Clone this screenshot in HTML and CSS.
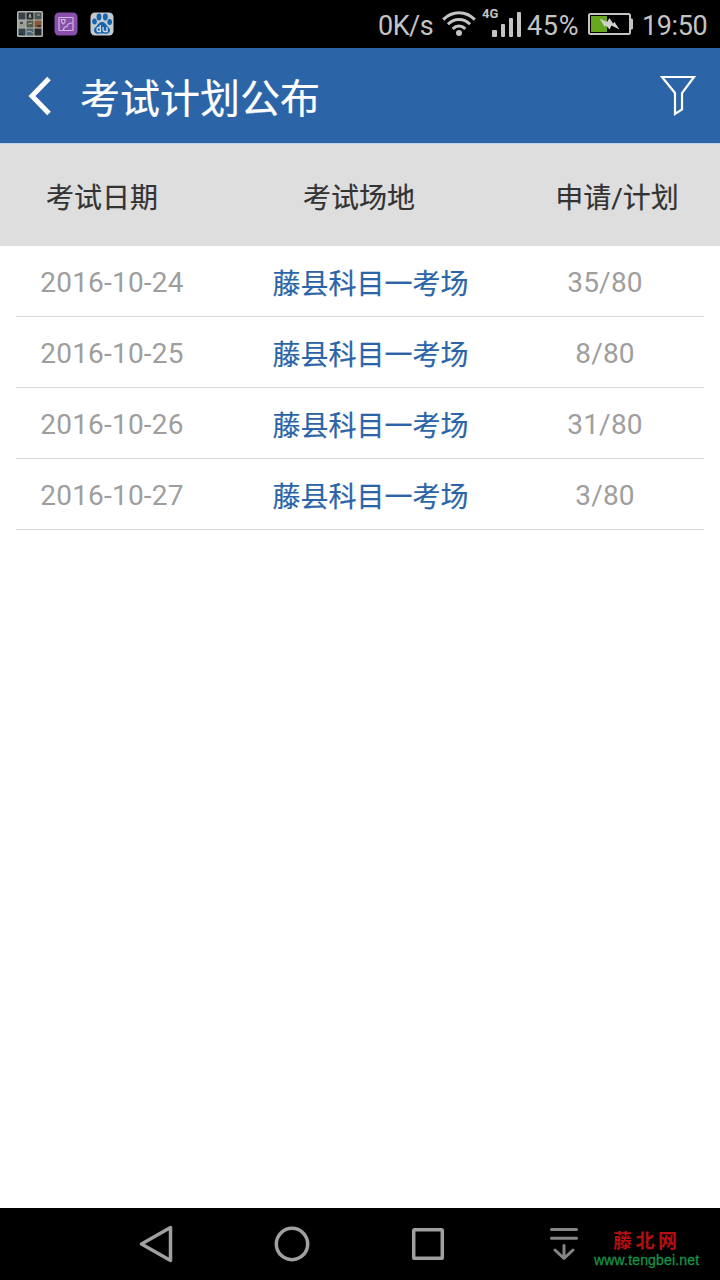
FILE: index.html
```html
<!DOCTYPE html>
<html lang="zh-CN">
<head>
    <meta charset="UTF-8">
    <meta name="viewport" content="width=device-width, initial-scale=1.0">
    <title>考试计划公布</title>
    <link rel="stylesheet" href="styles.css">
</head>
<body>
    <!-- Status Bar -->
    <div class="status-bar">
        <div class="notifications">
            <svg class="icon-gallery" width="26" height="26" viewBox="0 0 26 26">
                <rect width="26" height="26" rx="1.5" fill="#b4b6b1"/>
                <rect x="1.5" y="1.5" width="7" height="7" fill="#38424a"/>
                <rect x="9.5" y="1.5" width="7" height="7" fill="#242a2e"/>
                <rect x="17.5" y="1.5" width="7" height="7" fill="#4b5555"/>
                <rect x="1.5" y="9.5" width="7" height="7" fill="#9a9c92"/>
                <rect x="9.5" y="9.5" width="7" height="7" fill="#525d4b"/>
                <rect x="17.5" y="9.5" width="7" height="7" fill="#8a5536"/>
                <rect x="1.5" y="17.5" width="7" height="7" fill="#34454d"/>
                <rect x="9.5" y="17.5" width="7" height="7" fill="#4a6572"/>
                <rect x="17.5" y="17.5" width="7" height="7" fill="#20292c"/>
                <path d="M12 7l1-4 1 4M20 4h3M2 11l3 2 3-2M11 13l4-1M10 21l3-1 3 2" fill="none" stroke="#a9afa9" stroke-width="1"/>
                <path d="M3 12h3M20 15h4M2 23h4M19 23h5" fill="none" stroke="#242b2c" stroke-width="1.5"/>
            </svg>
            <svg class="icon-photo" width="24" height="24" viewBox="0 0 24 24">
                <rect x=".5" y=".5" width="23" height="23" rx="4.5" fill="#8850ac"/>
                <rect x="5" y="5.5" width="14" height="13" rx=".5" fill="none" stroke="#cfb8dc" stroke-width="1.2"/>
                <path d="M7.5 7.5h3.5v1.5q0 1.5-1.7 3q-1.8-1.5-1.8-3zM9.5 18c0-2.5 1.5-3.5 3.5-3.7c.3-2.3 2.5-3.3 5.5-3.3" fill="none" stroke="#cfb8dc" stroke-width="1.2"/>
            </svg>
            <svg class="icon-baidu" width="24" height="24" viewBox="0 0 24 24">
                <rect x=".5" y=".5" width="23" height="23" rx="4.5" fill="#c3cbd1"/>
                <g fill="#1763ae">
                    <ellipse cx="9" cy="5" rx="2.4" ry="3.4"/>
                    <ellipse cx="15.3" cy="5" rx="2.4" ry="3.4"/>
                    <ellipse cx="4.5" cy="9.5" rx="2.3" ry="3"/>
                    <ellipse cx="19.7" cy="10" rx="2.3" ry="3"/>
                    <path d="M12 10c3 0 3.7 2.5 5.5 4.2c2 1.8 3 3.2 2.4 5c-.8 3.1-4 2.4-7.9 2.4s-7.1.7-7.9-2.4c-.6-1.8.4-3.2 2.4-5c1.8-1.7 2.5-4.2 5.5-4.2z"/>
                </g>
                <path d="M10.3 13v6.5H8.5q-1.5 0-1.5-2t1.5-2h1.8M13 15v3q0 1.5 1.5 1.5H17V15" fill="none" stroke="#d5dfe8" stroke-width="1.3"/>
            </svg>
        </div>
        <div class="indicators">
            <span class="speed">0K/s</span>
            <svg class="icon-wifi" width="34" height="26" viewBox="0 0 34 26" fill="none" stroke="#c4c4c4" stroke-width="3">
                <path d="M1.2 8.6C10-.7 24-.7 32.8 8.6M5.9 13.3C12.3 6.8 21.7 6.8 28.1 13.3M10.7 17.8C14.5 14.2 19.5 14.2 23.3 17.8"/>
                <circle cx="17" cy="22" r="3" fill="#c4c4c4" stroke="none"/>
            </svg>
            <div class="signal">
                <span class="network">4G</span>
                <svg class="icon-signal" width="30" height="26" viewBox="0 0 30 26" fill="#c4c4c4">
                    <rect x="0" y="18" width="5" height="7" rx="1"/>
                    <rect x="9" y="12" width="4" height="13" rx="1"/>
                    <rect x="17" y="6" width="4" height="19" rx="1"/>
                    <rect x="25" y="0" width="4" height="25" rx="1"/>
                </svg>
            </div>
            <span class="percent">45%</span>
            <svg class="icon-battery" width="45" height="22" viewBox="0 0 45 22">
                <rect x="1" y="1" width="41" height="20" rx="1.5" fill="none" stroke="#c4c4c4" stroke-width="2"/>
                <path d="M43 5.5h.8q1.2 0 1.2 1.5v8q0 1.5-1.2 1.5H43z" fill="#c4c4c4"/>
                <rect x="3" y="3" width="16" height="16" fill="#67a61f"/>
                <path d="M11.5 5.5L19 9L21.5 5L25 10.500L26.500 9L31.500 16.500L23.500 12.500L21.500 16.500L18 12.500L16.500 13.500z" fill="#d0d0d0"/>
            </svg>
            <span class="clock">19:50</span>
        </div>
    </div>

    <!-- Header -->
    <header>
        <a href="#" class="back">
            <svg width="24" height="40" viewBox="0 0 24 40">
                <path d="M21 2.5L4 20L21 37.5" fill="none" stroke="#fff" stroke-width="5"/>
            </svg>
        </a>
        <h1>考试计划公布</h1>
        <a href="#" class="filter">
            <svg width="36" height="42" viewBox="0 0 36 42">
                <path d="M2 2H34L22 18V34.5L15 39V18z" fill="none" stroke="#fff" stroke-width="2.2"/>
            </svg>
        </a>
    </header>

    <!-- Exam Plan -->
    <main>
        <div class="plan-head">
            <span>考试日期</span>
            <span>考试场地</span>
            <span>申请/计划</span>
        </div>
        <div class="plan-list">
            <div class="plan-row">
                <span>2016-10-24</span>
                <a href="#">藤县科目一考场</a>
                <span>35/80</span>
            </div>
            <div class="plan-row">
                <span>2016-10-25</span>
                <a href="#">藤县科目一考场</a>
                <span>8/80</span>
            </div>
            <div class="plan-row">
                <span>2016-10-26</span>
                <a href="#">藤县科目一考场</a>
                <span>31/80</span>
            </div>
            <div class="plan-row">
                <span>2016-10-27</span>
                <a href="#">藤县科目一考场</a>
                <span>3/80</span>
            </div>
        </div>
    </main>

    <!-- Navigation Bar -->
    <nav>
        <svg width="36" height="40" viewBox="0 0 36 40">
            <path d="M32.5 3.5V36.5L3.5 20z" fill="none" stroke="#a0a0a0" stroke-width="3.5" stroke-linejoin="round"/>
        </svg>
        <svg width="36" height="40" viewBox="0 0 36 40">
            <circle cx="18" cy="20" r="15.7" fill="none" stroke="#a0a0a0" stroke-width="3.5"/>
        </svg>
        <svg width="36" height="40" viewBox="0 0 36 40">
            <rect x="3.7" y="5.7" width="28.6" height="28.6" rx=".8" fill="none" stroke="#a0a0a0" stroke-width="3.5"/>
        </svg>
        <svg width="36" height="40" viewBox="0 0 36 40">
            <path d="M5.5 5.5H30.5M5.5 14.3H30.5M18 21.5V34M9 26L18 34.5L27 26" fill="none" stroke="#858585" stroke-width="3" stroke-linecap="round" stroke-linejoin="round"/>
        </svg>
        <div class="watermark">
            <span class="site-name">藤北网</span>
            <span class="site-url">www.tengbei.net</span>
        </div>
    </nav>
</body>
</html>
```
FILE: styles.css
```css
/* General Styles */
body {
    margin: 0;
    height: 1280px;
    display: flex;
    flex-direction: column;
    overflow: hidden;
    font-family: Roboto, "Noto Sans CJK SC", sans-serif;
    background-color: #fff;
    color: #333;
}

a {
    color: inherit;
    text-decoration: none;
}

svg {
    display: block;
    flex-shrink: 0;
}

/* Status Bar */
.status-bar {
    display: flex;
    justify-content: space-between;
    height: 48px;
    padding: 0 12px 0 17px;
    background: #000;
    color: #c4c4c4;
    font-size: 27px;
    line-height: 50px;
}

.notifications {
    display: flex;
    align-items: center;
    gap: 12px;
}

.icon-gallery {
    margin-right: -1px;
}

.indicators {
    display: flex;
    align-items: center;
    white-space: nowrap;
}

.indicators > span {
    padding-top: 3px;
}

.speed {
    width: 64px;
    letter-spacing: -0.5px;
}

.icon-wifi {
    margin: 0 6px 0 0;
}

.signal {
    position: relative;
    width: 45px;
    height: 48px;
}

.network {
    position: absolute;
    top: 6px;
    left: 0;
    font-size: 13px;
    font-weight: bold;
    line-height: 15px;
}

.icon-signal {
    margin: 12px 0 0 10px;
}

.percent {
    width: 61px;
    letter-spacing: 0.7px;
}

.icon-battery {
    margin-right: 9px;
}

.clock {
    width: 66px;
    letter-spacing: -0.4px;
}

/* Header */
header {
    display: flex;
    align-items: center;
    height: 95px;
    padding: 0 24px 0 28px;
    background: #2b65a8;
    color: #fff;
    border-bottom: 1px solid #bdd3ee;
}

.back {
    margin: 1px 28px 0 0;
}

h1 {
    flex: 1;
    margin: 8px 0 0;
    font-size: 40px;
    font-weight: normal;
    line-height: 60px;
    -webkit-text-stroke: 0.2px;
}

/* Exam Plan */
main {
    flex: 1;
}

.plan-head {
    display: grid;
    grid-template-columns: 204px 310px 206px;
    height: 102px;
    background: #dedede;
    font-size: 28px;
    line-height: 110px;
    text-align: center;
    -webkit-text-stroke: 0.2px;
}

.plan-list {
    padding: 0 16px;
}

.plan-row {
    display: grid;
    grid-template-columns: 192px 325px 144px;
    height: 70px;
    border-bottom: 1px solid #d9d9d9;
    color: #9e9e9e;
    font-size: 28px;
    line-height: 74px;
    letter-spacing: 0.2px;
    text-align: center;
}

.plan-row a {
    color: #2b65a8;
    line-height: 77px;
    letter-spacing: 0;
    -webkit-text-stroke: 0.2px;
}

/* Navigation Bar */
nav {
    display: flex;
    align-items: center;
    gap: 100px;
    height: 72px;
    padding-left: 138px;
    background: #000;
}

.watermark {
    display: flex;
    flex-direction: column;
    margin-left: -88px;
    padding-top: 7px;
}

.site-name {
    padding-left: 19px;
    color: #b40d12;
    font-family: "Noto Sans CJK SC", sans-serif;
    font-size: 19px;
    font-weight: bold;
    line-height: 24px;
    letter-spacing: 3.5px;
}

.site-url {
    color: #159447;
    font-family: "Liberation Sans", sans-serif;
    font-size: 14px;
    line-height: 16px;
    letter-spacing: 0.17px;
    -webkit-text-stroke: 0.3px;
}
```
